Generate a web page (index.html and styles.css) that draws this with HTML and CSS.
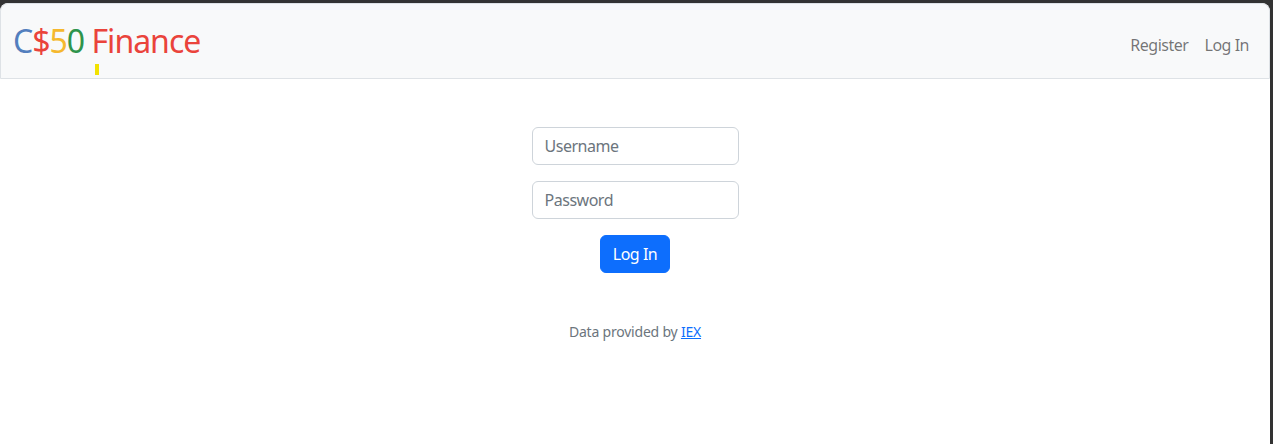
FILE: index.html
```html
<!DOCTYPE html>
<html lang="en">
<head>
<meta charset="utf-8">
<title>C$50 Finance: Log In</title>
<link rel="stylesheet" href="styles.css">
</head>
<body>
<div class="window">
  <nav class="navbar">
    <a class="brand" href="#"><span class="blue">C</span><span class="red">$</span><span class="yellow">5</span><span class="green">0</span> <span class="red">Finance</span></a>
    <ul class="nav">
      <li><a class="nav-link" href="#">Register</a></li>
      <li><a class="nav-link" href="#">Log In</a></li>
    </ul>
    <span class="caret"></span>
  </nav>
  <main class="main">
    <form class="login">
      <input class="field" type="text" placeholder="Username">
      <input class="field" type="password" placeholder="Password">
      <button class="btn" type="button">Log In</button>
    </form>
  </main>
  <footer class="footer">Data provided by <a href="#">IEX</a></footer>
</div>
</body>
</html>
```

FILE: styles.css
```css
* { box-sizing: border-box; }
html, body { margin: 0; padding: 0; height: 100%; }
body {
  background: #333333;
  padding: 3px 3px 0 0;
  font-family: "Noto Sans", "Open Sans", sans-serif;
  font-size: 16px;
  line-height: 1.5;
  letter-spacing: -0.03em;
  color: #212529;
}
.window {
  background: #ffffff;
  height: 100%;
  border-radius: 8px 8px 0 0;
  overflow: hidden;
}
.navbar {
  position: relative;
  display: flex;
  align-items: center;
  justify-content: space-between;
  background: #f8f9fa;
  border: 1px solid #dee2e6;
  border-radius: 8px 8px 0 0;
  padding: 8px 12px;
}
.brand {
  font-size: 32px;
  line-height: 48px;
  letter-spacing: -0.031em;
  padding: 5px 0;
  text-decoration: none;
  color: #ea433b;
}
.blue { color: #537fbe; }
.red { color: #ea433b; }
.yellow { color: #f5b82e; }
.green { color: #2e944b; }
.nav {
  display: flex;
  list-style: none;
  margin: 0 0 5px;
  padding: 0;
  align-self: flex-end;
}
.nav-link {
  display: block;
  padding: 8px 8px;
  color: rgba(0,0,0,0.55);
  text-decoration: none;
}
.caret {
  position: absolute;
  left: 94px;
  top: 60px;
  width: 4px;
  height: 11px;
  background: #f2e200;
}
.main {
  padding: 48px 12px;
  text-align: center;
}
.login {
  display: flex;
  flex-direction: column;
  align-items: center;
  gap: 16px;
}
.field {
  width: 207px;
  height: 38px;
  padding: 6px 12px;
  font: inherit;
  font-size: 16px;
  letter-spacing: -0.03em;
  color: #212529;
  border: 1px solid #ced4da;
  border-radius: 6px;
  background: #fff;
}
.field::placeholder { color: #6c757d; opacity: 1; }
.btn {
  height: 38px;
  padding: 6px 12px;
  font: inherit;
  font-size: 16px;
  letter-spacing: -0.03em;
  color: #fff;
  background: #0d6efd;
  border: 1px solid #0d6efd;
  border-radius: 6px;
}
.footer {
  text-align: center;
  font-size: 14px;
  line-height: 21px;
  letter-spacing: -0.015em;
  color: #6c757d;
}
.footer a { color: #0d6efd; }
```
